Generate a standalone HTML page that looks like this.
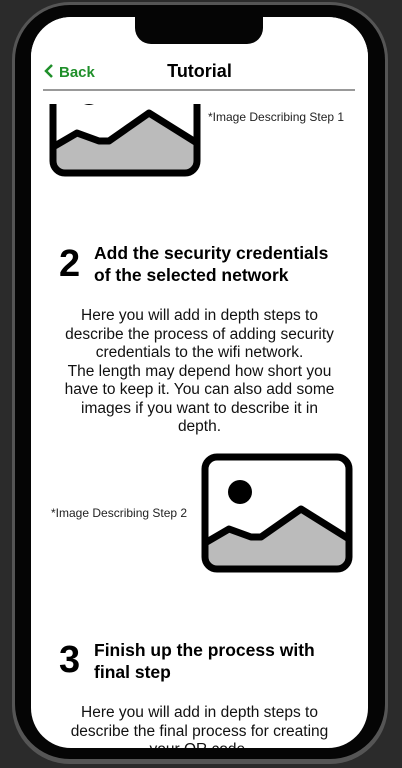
<html><head><style>
body{margin:0;width:402px;height:768px;background:#2b2b2b;position:relative;overflow:hidden;font-family:"Liberation Sans",sans-serif}
.outer{position:absolute;left:12px;top:2px;width:376px;height:762px;border-radius:58px;background:#555;}
.bez{position:absolute;left:15px;top:5px;width:370px;height:754px;border-radius:55px;background:#050505}
.scr{position:absolute;left:31px;top:17px;width:337px;height:731px;border-radius:40px;background:#fff;overflow:hidden}
.notch{position:absolute;left:104px;top:0;width:128px;height:27px;background:#050505;border-radius:0 0 16px 16px;z-index:5}
.hdr{position:absolute;left:0;top:0;width:337px;height:87px;background:#fff;z-index:3}
.back{position:absolute;left:12px;top:46px;color:#1f8f2a;font-size:15px;font-weight:bold}
.title{position:absolute;left:0;width:337px;text-align:center;top:44px;font-size:18px;font-weight:bold}
.line{position:absolute;left:12px;top:72px;width:312px;height:2px;background:#999}
.cap{position:absolute;font-size:12px;color:#222}
.num{position:absolute;font-size:38px;font-weight:bold}
.h{position:absolute;left:63px;font-size:17.5px;font-weight:bold;line-height:22px;width:250px}
.p{position:absolute;left:30px;width:277px;text-align:center;font-size:15.5px;line-height:18.5px;color:#111}
</style></head><body>
<div class="outer"></div><div class="bez"></div>
<div class="scr">
<div class="notch"></div>
<div class="hdr"><div class="back"><svg width="12" height="16" viewBox="0 0 12 16" style="vertical-align:-2px;margin-right:4px"><path d="M9 2L3 8l6 6" stroke="#1f8f2a" stroke-width="2.5" fill="none"/></svg>Back</div>
<div class="title">Tutorial</div><div class="line"></div></div>
<svg style="position:absolute;left:18px;top:40px" width="152" height="120" viewBox="0 0 152 120"><path d="M4 90 L28 76 L50 84 L60 84 L100 56 L148 86 L148 104 Q148 116 136 116 L16 116 Q4 116 4 104Z" fill="#bbb"/><path d="M4 90 L28 76 L50 84 L60 84 L100 56 L148 86" stroke="#000" stroke-width="7" fill="none" stroke-linejoin="round"/><circle cx="40" cy="36" r="12" fill="#000"/><rect x="4" y="4" width="144" height="112" rx="12" fill="none" stroke="#000" stroke-width="7"/></svg>
<div class="cap" style="left:177px;top:93px">*Image Describing Step 1</div>
<div class="num" style="left:28px;top:226px">2</div>
<div class="h" style="top:225px">Add the security credentials of the selected network</div>
<div class="p" style="top:290px">Here you will add in depth steps to describe the process of adding security credentials to the wifi network.<br>The length may depend how short you have to keep it. You can also add some images if you want to describe it in depth.</div>
<svg style="position:absolute;left:170px;top:436px" width="152" height="120" viewBox="0 0 152 120"><path d="M4 90 L28 76 L50 84 L60 84 L100 56 L148 86 L148 104 Q148 116 136 116 L16 116 Q4 116 4 104Z" fill="#bbb"/><path d="M4 90 L28 76 L50 84 L60 84 L100 56 L148 86" stroke="#000" stroke-width="7" fill="none" stroke-linejoin="round"/><circle cx="39" cy="39" r="12" fill="#000"/><rect x="4" y="4" width="144" height="112" rx="12" fill="none" stroke="#000" stroke-width="7"/></svg>
<div class="cap" style="left:20px;top:489px">*Image Describing Step 2</div>
<div class="num" style="left:28px;top:622px">3</div>
<div class="h" style="top:622px">Finish up the process with final step</div>
<div class="p" style="top:687px">Here you will add in depth steps to describe the final process for creating your QR code.</div>
</div>
</body></html>
